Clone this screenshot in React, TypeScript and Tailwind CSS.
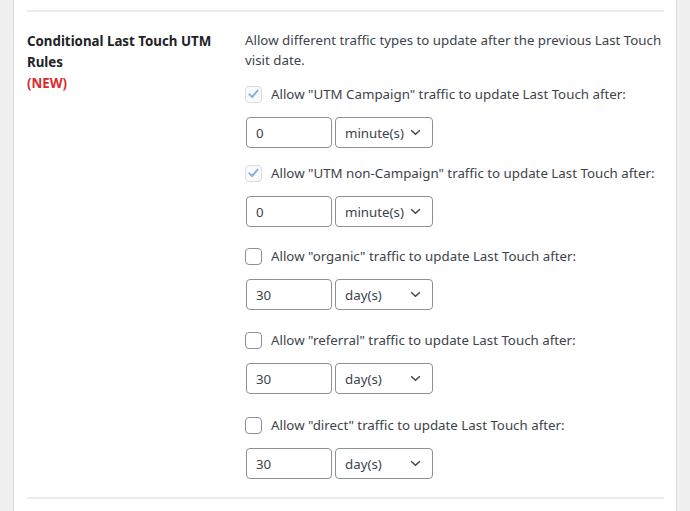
import { useState } from 'react';

type Rule = {
  id: string;
  label: string;
  value: string;
  unit: string;
  checked: boolean;
  gap: string;
};

const RULES: Rule[] = [
  { id: 'utm_campaign', label: 'Allow "UTM Campaign" traffic to update Last Touch after:', value: '0', unit: 'minute(s)', checked: true, gap: 'mt-[14px]' },
  { id: 'utm_non_campaign', label: 'Allow "UTM non-Campaign" traffic to update Last Touch after:', value: '0', unit: 'minute(s)', checked: true, gap: 'mt-[15px]' },
  { id: 'organic', label: 'Allow "organic" traffic to update Last Touch after:', value: '30', unit: 'day(s)', checked: false, gap: 'mt-[19px]' },
  { id: 'referral', label: 'Allow "referral" traffic to update Last Touch after:', value: '30', unit: 'day(s)', checked: false, gap: 'mt-[20px]' },
  { id: 'direct', label: 'Allow "direct" traffic to update Last Touch after:', value: '30', unit: 'day(s)', checked: false, gap: 'mt-[21px]' },
];

function Checkbox({ checked, disabled }: { checked: boolean; disabled: boolean }) {
  return (
    <span
      className={`w-[17px] h-[17px] rounded-[4px] border flex items-center justify-center shrink-0 ${
        disabled ? 'border-[#dcdcde] bg-[#fafafa]' : 'border-[#8c8f94] bg-white'
      }`}
    >
      {checked && (
        <svg viewBox="0 0 20 20" className="w-[16px] h-[16px]">
          <path d="M4.5 10.5 L8.2 14 L15.5 5.5" fill="none" stroke="#7fb2e5" strokeWidth="2.6" strokeLinecap="round" strokeLinejoin="round" />
        </svg>
      )}
    </span>
  );
}

function Select({ value }: { value: string }) {
  return (
    <div className="w-[98px] h-[31px] ml-[3px] border border-[#8c8f94] rounded-[4px] bg-white flex items-center justify-between pl-[9px] pr-[11px]">
      <span>{value}</span>
      <svg viewBox="0 0 12 8" className="w-[11px] h-[7px]">
        <path d="M1 1.5 L6 6 L11 1.5" fill="none" stroke="#3c434a" strokeWidth="1.6" />
      </svg>
    </div>
  );
}

export default function App() {
  const [rules] = useState(RULES);

  return (
    <div
      className="w-[690px] h-[511px] bg-[#f0f0f1] flex overflow-hidden text-[#3c434a] text-[13.3px]"
      style={{ fontFamily: '"Noto Sans", "Open Sans", sans-serif' }}
    >
      <div className="ml-[13px] w-[664px] h-full bg-white border-x border-[#dcdcde] pl-[13px] pr-[12px]">
        <div className="mt-[10px] border-t-2 border-[#ebebeb]" />

        {/* Setting row */}
        <div className="flex">
          <div className="w-[218px] shrink-0 pt-[19px] text-[13.3px] font-bold text-[#1d2327] leading-[21px]">
            <div>Conditional Last Touch UTM Rules</div>
            <div className="text-[#d92b2b]">(NEW)</div>
          </div>

          <div className="pt-[18px] pb-[18px] leading-[20px]">
            <p>Allow different traffic types to update after the previous Last Touch visit date.</p>

            {rules.map(rule => (
              <div key={rule.id}>
                <label className={`flex items-center gap-[9px] ${rule.gap}`}>
                  <Checkbox checked={rule.checked} disabled={rule.checked} />
                  <span>{rule.label}</span>
                </label>
                <div className="flex mt-[13px] ml-px">
                  <div className="w-[86px] h-[31px] border border-[#8c8f94] rounded-[4px] bg-white flex items-center pl-[9px]">
                    {rule.value}
                  </div>
                  <Select value={rule.unit} />
                </div>
              </div>
            ))}
          </div>
        </div>

        <div className="border-t-2 border-[#ebebeb]" />
      </div>
    </div>
  );
}
